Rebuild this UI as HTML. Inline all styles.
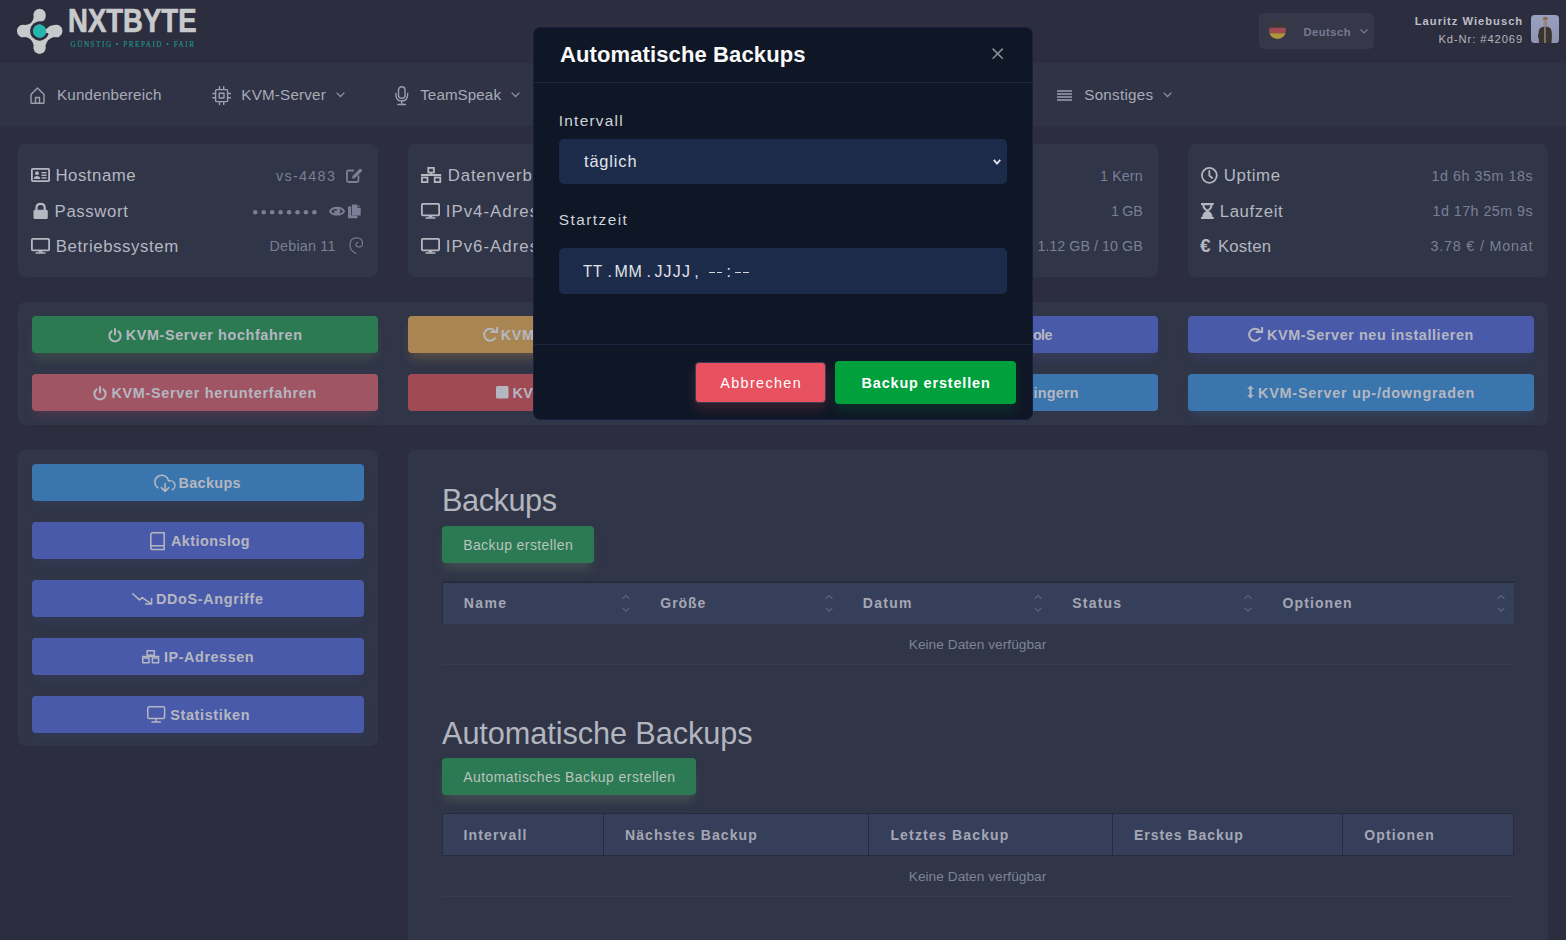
<!DOCTYPE html><html><head><meta charset="utf-8"><style>*{box-sizing:border-box;margin:0;padding:0}html,body{width:1566px;height:940px;overflow:hidden;position:relative;background:#2c2d3e;font-family:'Liberation Sans',sans-serif}</style></head><body>
<div style="position:absolute;left:0px;top:0px;width:1566px;height:63px;background:#2c2d3e;border-radius:0px;"></div>
<svg style="position:absolute;left:0px;top:0px;overflow:visible;" width="70" height="60" viewBox="0 0 70 60"><g transform="translate(39.6,31)"><path d="M -5.92,-13.85 A 6.3 6.3 0 1 1 5.92,-13.85 Q 5.5,-10.5 2,-9.6 L 0,0 L 6.9,-2.3 Q 10,-5.6 14.45,-5.92 A 6.3 6.3 0 1 1 14.45,5.92 Q 7.5,7.5 5.92,14.45 A 6.3 6.3 0 1 1 -5.92,14.45 Q -7.2,7.2 -14.25,5.92 A 6.3 6.3 0 1 1 -14.25,-5.92 Q -6.8,-6.8 -5.92,-13.85 Z" fill="#c8c9ca"/><path d="M 7.3,3.4 A 8.05 8.05 0 1 1 4.03,-6.97" fill="none" stroke="#2c2d3e" stroke-width="3.1" stroke-linecap="round"/><circle cx="0" cy="0" r="6.6" fill="#23b6ad"/></g></svg>
<div style="position:absolute;left:68.00px;top:1.07px;line-height:41px;white-space:nowrap;font-family:'Liberation Sans';font-size:32.4px;font-weight:700;color:#c8c9cb;letter-spacing:0.000px;transform:scaleX(0.85);transform-origin:0 0;-webkit-text-stroke:0.7px #c8c9cb;">NXTBYTE</div>
<div style="position:absolute;left:70.50px;top:41.00px;line-height:9px;white-space:nowrap;font-family:'Liberation Serif';font-size:7.2px;font-weight:400;color:#1f918b;letter-spacing:1.504px;-webkit-text-stroke:0.15px #1f918b;">GÜNSTIG • PREPAID • FAIR</div>
<div style="position:absolute;left:1259px;top:13px;width:115px;height:36px;background:#363849;border-radius:5px;"></div>
<svg style="position:absolute;left:1269px;top:22px;overflow:visible;" width="17" height="17" viewBox="0 0 17 17"><defs><clipPath id="fc"><circle cx="8.5" cy="8.5" r="8.5"/></clipPath></defs><g clip-path="url(#fc)"><rect x="0" y="0" width="17" height="5.67" fill="#3a393c"/><rect x="0" y="5.67" width="17" height="5.67" fill="#a04a50"/><rect x="0" y="11.33" width="17" height="5.7" fill="#b0983a"/></g></svg>
<div style="position:absolute;left:1303.50px;top:25.02px;line-height:14px;white-space:nowrap;font-family:'Liberation Sans';font-size:11.2px;font-weight:700;color:#777a90;letter-spacing:0.477px;">Deutsch</div>
<svg style="position:absolute;left:1360px;top:29px;overflow:visible;" width="8" height="5" viewBox="0 0 8 5"><path d="M0.5,0.5 L4,4 L7.5,0.5" fill="none" stroke="#777a90" stroke-width="1.2"/></svg>
<div style="position:absolute;left:1414.80px;top:14.12px;line-height:14px;white-space:nowrap;font-family:'Liberation Sans';font-size:11.2px;font-weight:700;color:#bdbec6;letter-spacing:0.992px;">Lauritz Wiebusch</div>
<div style="position:absolute;left:1438.40px;top:32.12px;line-height:14px;white-space:nowrap;font-family:'Liberation Sans';font-size:11.2px;font-weight:400;color:#b3b5bd;letter-spacing:0.920px;">Kd-Nr: #42069</div>
<svg style="position:absolute;left:1531px;top:15px;overflow:visible;" width="28" height="28" viewBox="0 0 28 28"><defs><clipPath id="avc"><rect x="0" y="0" width="28" height="28" rx="3.5"/></clipPath><linearGradient id="avg" x1="0" y1="0" x2="0.3" y2="1"><stop offset="0" stop-color="#9aa2c2"/><stop offset="1" stop-color="#8d95b0"/></linearGradient></defs><g clip-path="url(#avc)"><rect width="28" height="28" fill="url(#avg)"/><ellipse cx="14.4" cy="3.6" rx="2.4" ry="1.9" fill="#94644a"/><rect x="12.4" y="4.5" width="3.8" height="7" rx="1.5" fill="#9c8580"/><path d="M8,28 L7.6,21 Q7.2,16 8.8,13.2 L12.4,11.8 L16.6,11.8 L19.8,13.4 Q21.2,17 20.9,22 L20.5,28 Z" fill="#3a332f"/><path d="M7.2,19 L7,23 L10,23 L10.5,19 Z" fill="#3a332f"/><rect x="13" y="12" width="1.9" height="16" fill="#77736e"/></g></svg>
<div style="position:absolute;left:0px;top:63px;width:1566px;height:63px;background:#2f3345;border-radius:0px;"></div>
<svg style="position:absolute;left:30px;top:87px;overflow:visible;" width="15" height="17" viewBox="0 0 15 17"><path d="M1,7.5 L7.5,1 L14,7.5 L14,15.5 Q14,16.3 13.2,16.3 L1.8,16.3 Q1,16.3 1,15.5 Z" stroke="#9d9fad" fill="none" stroke-width="1.4" stroke-linecap="round" stroke-linejoin="round"/><path d="M5.5,16.3 L5.5,10.5 L9.5,10.5 L9.5,16.3" stroke="#9d9fad" fill="none" stroke-width="1.4" stroke-linecap="round" stroke-linejoin="round"/></svg>
<div style="position:absolute;left:57.00px;top:85.03px;line-height:19px;white-space:nowrap;font-family:'Liberation Sans';font-size:15.2px;font-weight:400;color:#a8aab6;letter-spacing:0.193px;">Kundenbereich</div>
<svg style="position:absolute;left:212px;top:86px;overflow:visible;" width="19" height="19" viewBox="0 0 19 19"><rect x="3.6" y="3.6" width="12" height="12" rx="1.2" stroke="#9d9fad" fill="none" stroke-width="1.4" stroke-linecap="round" stroke-linejoin="round"/><rect x="7.2" y="7.2" width="4.8" height="4.8" stroke="#9d9fad" fill="none" stroke-width="1.4" stroke-linecap="round" stroke-linejoin="round"/><path d="M7.5,0.8 V3.3 M11.7,0.8 V3.3 M7.5,15.9 V18.4 M11.7,15.9 V18.4 M0.8,7.5 H3.3 M0.8,11.7 H3.3 M15.9,7.5 H18.4 M15.9,11.7 H18.4" stroke="#9d9fad" fill="none" stroke-width="1.4" stroke-linecap="round" stroke-linejoin="round"/></svg>
<div style="position:absolute;left:241.30px;top:84.63px;line-height:19px;white-space:nowrap;font-family:'Liberation Sans';font-size:15.2px;font-weight:400;color:#a8aab6;letter-spacing:0.200px;">KVM-Server</div>
<svg style="position:absolute;left:336px;top:92px;overflow:visible;" width="9" height="5" viewBox="0 0 9 5"><path d="M0.6,0.6 L4.5,4.5 L8.4,0.6" fill="none" stroke="#8c8fa0" stroke-width="1.3"/></svg>
<svg style="position:absolute;left:395px;top:86px;overflow:visible;" width="14" height="19" viewBox="0 0 14 19"><rect x="3.5" y="0.8" width="6.5" height="11.5" rx="3.25" stroke="#9d9fad" fill="none" stroke-width="1.4" stroke-linecap="round" stroke-linejoin="round"/><path d="M0.8,7.5 Q0.8,15 6.75,15 Q12.7,15 12.7,7.5" stroke="#9d9fad" fill="none" stroke-width="1.4" stroke-linecap="round" stroke-linejoin="round"/><path d="M6.75,15 V18.5 M3,18.5 H10.5" stroke="#9d9fad" fill="none" stroke-width="1.4" stroke-linecap="round" stroke-linejoin="round"/></svg>
<div style="position:absolute;left:420.20px;top:84.63px;line-height:19px;white-space:nowrap;font-family:'Liberation Sans';font-size:15.2px;font-weight:400;color:#a8aab6;letter-spacing:0.075px;">TeamSpeak</div>
<svg style="position:absolute;left:511px;top:92px;overflow:visible;" width="9" height="5" viewBox="0 0 9 5"><path d="M0.6,0.6 L4.5,4.5 L8.4,0.6" fill="none" stroke="#8c8fa0" stroke-width="1.3"/></svg>
<svg style="position:absolute;left:1057px;top:90px;overflow:visible;" width="15" height="11" viewBox="0 0 15 11"><path d="M0,1 H15 M0,4 H15 M0,7 H15 M0,10 H15" stroke="#9d9fad" stroke-width="1.3"/></svg>
<div style="position:absolute;left:1084.30px;top:84.63px;line-height:19px;white-space:nowrap;font-family:'Liberation Sans';font-size:15.2px;font-weight:400;color:#a8aab6;letter-spacing:0.250px;">Sonstiges</div>
<svg style="position:absolute;left:1163px;top:92px;overflow:visible;" width="9" height="5" viewBox="0 0 9 5"><path d="M0.6,0.6 L4.5,4.5 L8.4,0.6" fill="none" stroke="#8c8fa0" stroke-width="1.3"/></svg>
<div style="position:absolute;left:18px;top:144px;width:360px;height:133px;background:#303547;border-radius:7px;"></div>
<div style="position:absolute;left:408px;top:144px;width:360px;height:133px;background:#303547;border-radius:7px;"></div>
<div style="position:absolute;left:798px;top:144px;width:360px;height:133px;background:#303547;border-radius:7px;"></div>
<div style="position:absolute;left:1188px;top:144px;width:360px;height:133px;background:#303547;border-radius:7px;"></div>
<svg style="position:absolute;left:31px;top:168px;overflow:visible;" width="19" height="14" viewBox="0 0 19 14"><rect x="0.9" y="0.9" width="17.2" height="12.2" rx="0.8" fill="none" stroke="#b5b7c1" stroke-width="1.8"/><circle cx="6" cy="5.2" r="1.9" fill="#b5b7c1"/><path d="M2.8,11 Q3,8 6,8 Q9,8 9.2,11 Z" fill="#b5b7c1"/><rect x="10.5" y="4" width="5" height="1.4" fill="#b5b7c1"/><rect x="10.5" y="6.6" width="5" height="1.4" fill="#b5b7c1"/><rect x="10.5" y="9.2" width="5" height="1.4" fill="#b5b7c1"/></svg>
<div style="position:absolute;left:55.40px;top:164.98px;line-height:21px;white-space:nowrap;font-family:'Liberation Sans';font-size:16.8px;font-weight:400;color:#b5b7c1;letter-spacing:0.531px;">Hostname</div>
<svg style="position:absolute;left:32.6px;top:203px;overflow:visible;" width="15.3" height="16" viewBox="0 0 15.3 16"><path d="M3.5,7 V4.8 Q3.5,0.9 7.6,0.9 Q11.7,0.9 11.7,4.8 V7" fill="none" stroke="#b5b7c1" stroke-width="2.2"/><rect x="0.5" y="6.8" width="14.3" height="9.2" rx="1.5" fill="#b5b7c1"/></svg>
<div style="position:absolute;left:54.60px;top:200.68px;line-height:21px;white-space:nowrap;font-family:'Liberation Sans';font-size:16.8px;font-weight:400;color:#b5b7c1;letter-spacing:0.598px;">Passwort</div>
<svg style="position:absolute;left:31px;top:238px;overflow:visible;" width="19" height="16" viewBox="0 0 19 16"><rect x="0.9" y="0.9" width="17.2" height="11.4" rx="0.8" fill="none" stroke="#b5b7c1" stroke-width="1.8"/><rect x="7.6" y="12.3" width="3.8" height="2.2" fill="#b5b7c1"/><rect x="4.5" y="14.2" width="10" height="1.6" rx="0.5" fill="#b5b7c1"/></svg>
<div style="position:absolute;left:55.70px;top:235.68px;line-height:21px;white-space:nowrap;font-family:'Liberation Sans';font-size:16.8px;font-weight:400;color:#b5b7c1;letter-spacing:0.606px;">Betriebssystem</div>
<div style="position:absolute;left:275.90px;top:167.04px;line-height:18px;white-space:nowrap;font-family:'Liberation Sans';font-size:14.3px;font-weight:400;color:#7b7f96;letter-spacing:1.354px;">vs-4483</div>
<svg style="position:absolute;left:346px;top:168px;overflow:visible;" width="16.6" height="14" viewBox="0 0 16.6 14"><path d="M8,2.5 H2.5 Q1,2.5 1,4 V12.5 Q1,14 2.5,14 H11 Q12.5,14 12.5,12.5 V7.5" fill="none" stroke="#7b7f96" stroke-width="1.8"/><path d="M6,10.5 L6.5,8 L13.5,1 Q14.3,0.3 15.1,1 L15.8,1.7 Q16.5,2.5 15.8,3.3 L8.8,10.2 Z" fill="#7b7f96"/></svg>
<svg style="position:absolute;left:253px;top:209.5px;overflow:visible;" width="64" height="4.5" viewBox="0 0 64 4.5"><circle cx="2.25" cy="2.25" r="2.25" fill="#7b7f96"/><circle cx="10.70" cy="2.25" r="2.25" fill="#7b7f96"/><circle cx="19.15" cy="2.25" r="2.25" fill="#7b7f96"/><circle cx="27.60" cy="2.25" r="2.25" fill="#7b7f96"/><circle cx="36.05" cy="2.25" r="2.25" fill="#7b7f96"/><circle cx="44.50" cy="2.25" r="2.25" fill="#7b7f96"/><circle cx="52.95" cy="2.25" r="2.25" fill="#7b7f96"/><circle cx="61.40" cy="2.25" r="2.25" fill="#7b7f96"/></svg>
<svg style="position:absolute;left:328.8px;top:205.6px;overflow:visible;" width="16.1" height="10.4" viewBox="0 0 16.1 10.4"><path d="M1,5.2 C3.6,0.6 12.6,0.6 15.2,5.2 C12.6,9.8 3.6,9.8 1,5.2 Z" fill="none" stroke="#7b7f96" stroke-width="1.8"/><circle cx="8.2" cy="5.3" r="3" fill="#7b7f96"/><circle cx="6.9" cy="4.1" r="1" fill="#313546"/></svg>
<svg style="position:absolute;left:348px;top:203.6px;overflow:visible;" width="13" height="14.4" viewBox="0 0 13 14.4"><path d="M0,2.5 H3.1 V11.4 H9.5 V14.3 H0 Z" fill="#7b7f96"/><path d="M3.9,0.4 H9.6 L12.7,3.5 V11.4 H3.9 Z" fill="#7b7f96"/><path d="M9.6,0.4 V3.5 H12.7" fill="none" stroke="#313546" stroke-width="0.8"/></svg>
<div style="position:absolute;left:269.50px;top:237.04px;line-height:18px;white-space:nowrap;font-family:'Liberation Sans';font-size:14.3px;font-weight:400;color:#7b7f96;letter-spacing:0.222px;">Debian 11</div>
<svg style="position:absolute;left:348.7px;top:236.8px;overflow:visible;" width="14" height="17" viewBox="0 0 14 17"><path d="M7,16.5 Q1,14 1,8 Q1,1 7.5,0.8 Q13.5,0.8 13.5,6.5 Q13.5,10 10,10 Q7,10 7,7.5 Q7,5.5 9,5.5" fill="none" stroke="#7b7f96" stroke-width="1.1" stroke-linecap="round"/></svg>
<svg style="position:absolute;left:421.2px;top:167.3px;overflow:visible;" width="20.3" height="15.6" viewBox="0 0 20.3 15.6"><rect x="7.3" y="0.9" width="5.6" height="4.6" fill="none" stroke="#b5b7c1" stroke-width="1.8"/><rect x="0.9" y="10.5" width="5.6" height="4.6" fill="none" stroke="#b5b7c1" stroke-width="1.8"/><rect x="13.7" y="10.5" width="5.6" height="4.6" fill="none" stroke="#b5b7c1" stroke-width="1.8"/><path d="M10.1,5.5 V7.8 M0,8 H20.2" stroke="#b5b7c1" stroke-width="1.8"/></svg>
<div style="position:absolute;left:447.80px;top:164.98px;line-height:21px;white-space:nowrap;font-family:'Liberation Sans';font-size:16.8px;font-weight:400;color:#b5b7c1;letter-spacing:0.815px;">Datenverbrauch</div>
<svg style="position:absolute;left:421px;top:203px;overflow:visible;" width="19" height="16" viewBox="0 0 19 16"><rect x="0.9" y="0.9" width="17.2" height="11.4" rx="0.8" fill="none" stroke="#b5b7c1" stroke-width="1.8"/><rect x="7.6" y="12.3" width="3.8" height="2.2" fill="#b5b7c1"/><rect x="4.5" y="14.2" width="10" height="1.6" rx="0.5" fill="#b5b7c1"/></svg>
<div style="position:absolute;left:445.80px;top:200.68px;line-height:21px;white-space:nowrap;font-family:'Liberation Sans';font-size:16.8px;font-weight:400;color:#b5b7c1;letter-spacing:1.024px;">IPv4-Adresse</div>
<svg style="position:absolute;left:421px;top:238px;overflow:visible;" width="19" height="16" viewBox="0 0 19 16"><rect x="0.9" y="0.9" width="17.2" height="11.4" rx="0.8" fill="none" stroke="#b5b7c1" stroke-width="1.8"/><rect x="7.6" y="12.3" width="3.8" height="2.2" fill="#b5b7c1"/><rect x="4.5" y="14.2" width="10" height="1.6" rx="0.5" fill="#b5b7c1"/></svg>
<div style="position:absolute;left:445.80px;top:235.68px;line-height:21px;white-space:nowrap;font-family:'Liberation Sans';font-size:16.8px;font-weight:400;color:#b5b7c1;letter-spacing:1.024px;">IPv6-Adresse</div>
<div style="position:absolute;left:1100.00px;top:167.04px;line-height:18px;white-space:nowrap;font-family:'Liberation Sans';font-size:14.3px;font-weight:400;color:#7b7f96;letter-spacing:0.115px;">1 Kern</div>
<div style="position:absolute;left:1111.00px;top:202.04px;line-height:18px;white-space:nowrap;font-family:'Liberation Sans';font-size:14.3px;font-weight:400;color:#7b7f96;letter-spacing:-0.298px;">1 GB</div>
<div style="position:absolute;left:1037.40px;top:237.04px;line-height:18px;white-space:nowrap;font-family:'Liberation Sans';font-size:14.3px;font-weight:400;color:#7b7f96;letter-spacing:0.028px;">1.12 GB / 10 GB</div>
<svg style="position:absolute;left:1201.2px;top:166.9px;overflow:visible;" width="16.7" height="16.7" viewBox="0 0 16.7 16.7"><circle cx="8.35" cy="8.35" r="7.45" fill="none" stroke="#b5b7c1" stroke-width="1.8"/><path d="M8.35,3.8 V8.6 L11.2,11" fill="none" stroke="#b5b7c1" stroke-width="1.8" stroke-linecap="round"/></svg>
<div style="position:absolute;left:1223.70px;top:164.68px;line-height:21px;white-space:nowrap;font-family:'Liberation Sans';font-size:16.8px;font-weight:400;color:#b5b7c1;letter-spacing:0.629px;">Uptime</div>
<svg style="position:absolute;left:1201.2px;top:203px;overflow:visible;" width="12.8" height="16" viewBox="0 0 12.8 16"><path d="M0,0 H12.8 V2 H11.5 Q11.5,6 7.5,8 Q11.5,10 11.5,14 H12.8 V16 H0 V14 H1.3 Q1.3,10 5.3,8 Q1.3,6 1.3,2 H0 Z" fill="#b5b7c1"/><path d="M3.3,2.2 H9.5 Q9.3,5 6.4,6.6 Q3.5,5 3.3,2.2 Z" fill="#323647"/></svg>
<div style="position:absolute;left:1219.70px;top:200.68px;line-height:21px;white-space:nowrap;font-family:'Liberation Sans';font-size:16.8px;font-weight:400;color:#b5b7c1;letter-spacing:0.617px;">Laufzeit</div>
<div style="position:absolute;left:1200.00px;top:234.21px;line-height:24px;white-space:nowrap;font-family:'Liberation Sans';font-size:19px;font-weight:700;color:#b5b7c1;letter-spacing:0.000px;">€</div>
<div style="position:absolute;left:1217.90px;top:235.68px;line-height:21px;white-space:nowrap;font-family:'Liberation Sans';font-size:16.8px;font-weight:400;color:#b5b7c1;letter-spacing:0.170px;">Kosten</div>
<div style="position:absolute;left:1431.40px;top:167.04px;line-height:18px;white-space:nowrap;font-family:'Liberation Sans';font-size:14.3px;font-weight:400;color:#7b7f96;letter-spacing:0.551px;">1d 6h 35m 18s</div>
<div style="position:absolute;left:1432.50px;top:202.04px;line-height:18px;white-space:nowrap;font-family:'Liberation Sans';font-size:14.3px;font-weight:400;color:#7b7f96;letter-spacing:0.459px;">1d 17h 25m 9s</div>
<div style="position:absolute;left:1430.40px;top:237.04px;line-height:18px;white-space:nowrap;font-family:'Liberation Sans';font-size:14.3px;font-weight:400;color:#7b7f96;letter-spacing:0.830px;">3.78 € / Monat</div>
<div style="position:absolute;left:18px;top:302px;width:1530px;height:123px;background:#303547;border-radius:7px;"></div>
<div style="position:absolute;left:32px;top:316px;width:346px;height:37px;background:#2b7a52;border-radius:4px;box-shadow:0 8px 11px -3px rgba(80,110,80,0.45);"></div>
<div style="position:absolute;left:32px;top:374px;width:346px;height:37px;background:#a05564;border-radius:4px;box-shadow:0 8px 11px -3px rgba(140,70,90,0.3);"></div>
<div style="position:absolute;left:408px;top:316px;width:360px;height:37px;background:#a98651;border-radius:4px;box-shadow:0 8px 11px -3px rgba(150,120,70,0.45);"></div>
<div style="position:absolute;left:408px;top:374px;width:360px;height:37px;background:#a04a56;border-radius:4px;"></div>
<div style="position:absolute;left:798px;top:316px;width:360px;height:37px;background:#4a5aab;border-radius:4px;box-shadow:0 8px 11px -3px rgba(70,80,150,0.3);"></div>
<div style="position:absolute;left:798px;top:374px;width:360px;height:37px;background:#3a75ae;border-radius:4px;"></div>
<div style="position:absolute;left:1188px;top:316px;width:346px;height:37px;background:#4a5aab;border-radius:4px;box-shadow:0 8px 11px -3px rgba(70,80,150,0.3);"></div>
<div style="position:absolute;left:1188px;top:374px;width:346px;height:37px;background:#3a75ae;border-radius:4px;box-shadow:0 8px 11px -3px rgba(60,100,150,0.3);"></div>
<svg style="position:absolute;left:107.5px;top:327.5px;overflow:visible;" width="14" height="14" viewBox="0 0 14 14"><path d="M3.6,3.4 A5.6 5.6 0 1 0 10.4,3.4" fill="none" stroke="#b5b7c0" stroke-width="2" stroke-linecap="round"/><path d="M7,0.9 V6.6" stroke="#b5b7c0" stroke-width="2" stroke-linecap="round"/></svg>
<div style="position:absolute;left:125.80px;top:325.81px;line-height:18px;white-space:nowrap;font-family:'Liberation Sans';font-size:14.4px;font-weight:700;color:#b5b7c0;letter-spacing:0.613px;">KVM-Server hochfahren</div>
<svg style="position:absolute;left:93px;top:385.5px;overflow:visible;" width="14" height="14" viewBox="0 0 14 14"><path d="M3.6,3.4 A5.6 5.6 0 1 0 10.4,3.4" fill="none" stroke="#b5b7c0" stroke-width="2" stroke-linecap="round"/><path d="M7,0.9 V6.6" stroke="#b5b7c0" stroke-width="2" stroke-linecap="round"/></svg>
<div style="position:absolute;left:111.40px;top:383.81px;line-height:18px;white-space:nowrap;font-family:'Liberation Sans';font-size:14.4px;font-weight:700;color:#b5b7c0;letter-spacing:0.703px;">KVM-Server herunterfahren</div>
<svg style="position:absolute;left:482.6px;top:326.9px;overflow:visible;" width="15" height="14" viewBox="0 0 15 14"><path d="M12.5,10.4 A6 6 0 1 1 11.8,3.9" fill="none" stroke="#b5b7c0" stroke-width="2"/><path d="M7.6,5.1 H14.1 V0" fill="none" stroke="#b5b7c0" stroke-width="2"/></svg>
<div style="position:absolute;left:500.70px;top:325.81px;line-height:18px;white-space:nowrap;font-family:'Liberation Sans';font-size:14.4px;font-weight:700;color:#b5b7c0;letter-spacing:0.642px;">KVM-Server neustarten</div>
<svg style="position:absolute;left:495.5px;top:386px;overflow:visible;" width="12.5" height="12.5" viewBox="0 0 12.5 12.5"><rect width="12.5" height="12.5" rx="1.5" fill="#b5b7c0"/></svg>
<div style="position:absolute;left:512.40px;top:383.81px;line-height:18px;white-space:nowrap;font-family:'Liberation Sans';font-size:14.4px;font-weight:700;color:#b5b7c0;letter-spacing:0.497px;">KVM-Server stoppen</div>
<div style="position:absolute;left:1032.90px;top:325.81px;line-height:18px;white-space:nowrap;font-family:'Liberation Sans';font-size:14.4px;font-weight:700;color:#b5b7c0;letter-spacing:-0.648px;">ole</div>
<div style="position:absolute;left:1033.60px;top:383.81px;line-height:18px;white-space:nowrap;font-family:'Liberation Sans';font-size:14.4px;font-weight:700;color:#b5b7c0;letter-spacing:0.203px;">ingern</div>
<svg style="position:absolute;left:1248px;top:326.9px;overflow:visible;" width="15" height="14" viewBox="0 0 15 14"><path d="M12.5,10.4 A6 6 0 1 1 11.8,3.9" fill="none" stroke="#b5b7c0" stroke-width="2"/><path d="M7.6,5.1 H14.1 V0" fill="none" stroke="#b5b7c0" stroke-width="2"/></svg>
<div style="position:absolute;left:1267.00px;top:325.81px;line-height:18px;white-space:nowrap;font-family:'Liberation Sans';font-size:14.4px;font-weight:700;color:#b5b7c0;letter-spacing:0.583px;">KVM-Server neu installieren</div>
<svg style="position:absolute;left:1247px;top:385px;overflow:visible;" width="7" height="14" viewBox="0 0 7 14"><path d="M3.5,0.5 L6.8,4 H4.6 V10 H6.8 L3.5,13.5 L0.2,10 H2.4 V4 H0.2 Z" fill="#b5b7c0"/></svg>
<div style="position:absolute;left:1258.00px;top:383.81px;line-height:18px;white-space:nowrap;font-family:'Liberation Sans';font-size:14.4px;font-weight:700;color:#b5b7c0;letter-spacing:0.783px;">KVM-Server up-/downgraden</div>
<div style="position:absolute;left:18px;top:450px;width:360px;height:296px;background:#303547;border-radius:7px;"></div>
<div style="position:absolute;left:32px;top:464px;width:332px;height:37px;background:#3a75ae;border-radius:4px;box-shadow:0 8px 11px -3px rgba(60,70,120,0.3);"></div>
<div style="position:absolute;left:32px;top:522px;width:332px;height:37px;background:#4a5aab;border-radius:4px;box-shadow:0 8px 11px -3px rgba(60,70,120,0.3);"></div>
<div style="position:absolute;left:32px;top:580px;width:332px;height:37px;background:#4a5aab;border-radius:4px;box-shadow:0 8px 11px -3px rgba(60,70,120,0.3);"></div>
<div style="position:absolute;left:32px;top:638px;width:332px;height:37px;background:#4a5aab;border-radius:4px;box-shadow:0 8px 11px -3px rgba(60,70,120,0.3);"></div>
<div style="position:absolute;left:32px;top:696px;width:332px;height:37px;background:#4a5aab;border-radius:4px;box-shadow:0 8px 11px -3px rgba(60,70,120,0.3);"></div>
<svg style="position:absolute;left:155.2px;top:475.2px;overflow:visible;" width="20.4" height="17" viewBox="0 0 20.4 17"><path d="M2.7,12.7 A6.9 6.9 0 1 1 13.6,6.1 A4.6 4.6 0 0 1 17.1,14.7" fill="none" stroke="#b5b7c0" stroke-width="1.5" stroke-linecap="round" stroke-linejoin="round"/><path d="M10.1,8.5 V16.4 M6.3,12.6 L10.1,16.4 L13.9,12.6" fill="none" stroke="#b5b7c0" stroke-width="1.5" stroke-linecap="round" stroke-linejoin="round"/></svg>
<div style="position:absolute;left:178.40px;top:473.81px;line-height:18px;white-space:nowrap;font-family:'Liberation Sans';font-size:14.4px;font-weight:700;color:#b5b7c0;letter-spacing:0.367px;">Backups</div>
<svg style="position:absolute;left:149.5px;top:531.8px;overflow:visible;" width="15" height="18.4" viewBox="0 0 15 18.4"><path d="M0.8,15 V3 Q0.8,0.8 3,0.8 H14.2 V13.8 H3 Q0.8,13.8 0.8,15.7 Q0.8,17.6 3,17.6 H14.2 V13.8" fill="none" stroke="#b5b7c0" stroke-width="1.5" stroke-linecap="round" stroke-linejoin="round"/></svg>
<div style="position:absolute;left:170.90px;top:531.81px;line-height:18px;white-space:nowrap;font-family:'Liberation Sans';font-size:14.4px;font-weight:700;color:#b5b7c0;letter-spacing:0.471px;">Aktionslog</div>
<svg style="position:absolute;left:132px;top:593px;overflow:visible;" width="20.5" height="12" viewBox="0 0 20.5 12"><path d="M0.7,0.8 L7.5,6.9 L10.3,4.6 L18.8,10.6 M13.6,10.9 H19.6 V5.4" fill="none" stroke="#b5b7c0" stroke-width="1.5" stroke-linecap="round" stroke-linejoin="round"/></svg>
<div style="position:absolute;left:155.90px;top:589.81px;line-height:18px;white-space:nowrap;font-family:'Liberation Sans';font-size:14.4px;font-weight:700;color:#b5b7c0;letter-spacing:0.663px;">DDoS-Angriffe</div>
<svg style="position:absolute;left:142.1px;top:650.2px;overflow:visible;" width="17.3" height="13.5" viewBox="0 0 17.3 13.5"><rect x="5.1" y="0.75" width="7.2" height="4.4" fill="none" stroke="#b5b7c0" stroke-width="1.5" stroke-linecap="round" stroke-linejoin="round"/><rect x="0.75" y="8" width="6.2" height="4.8" fill="none" stroke="#b5b7c0" stroke-width="1.5" stroke-linecap="round" stroke-linejoin="round"/><rect x="10.4" y="8" width="6.2" height="4.8" fill="none" stroke="#b5b7c0" stroke-width="1.5" stroke-linecap="round" stroke-linejoin="round"/><path d="M8.7,5.2 V6.6 M0.5,6.6 H16.9" fill="none" stroke="#b5b7c0" stroke-width="1.5" stroke-linecap="round" stroke-linejoin="round"/></svg>
<div style="position:absolute;left:164.00px;top:647.81px;line-height:18px;white-space:nowrap;font-family:'Liberation Sans';font-size:14.4px;font-weight:700;color:#b5b7c0;letter-spacing:0.562px;">IP-Adressen</div>
<svg style="position:absolute;left:147px;top:706px;overflow:visible;" width="18.4" height="17" viewBox="0 0 18.4 17"><rect x="0.8" y="0.8" width="16.8" height="11.6" rx="1.5" fill="none" stroke="#b5b7c0" stroke-width="1.5" stroke-linecap="round" stroke-linejoin="round"/><path d="M9.2,12.4 V15.8 M5,16 H13.4" fill="none" stroke="#b5b7c0" stroke-width="1.5" stroke-linecap="round" stroke-linejoin="round"/></svg>
<div style="position:absolute;left:170.20px;top:705.81px;line-height:18px;white-space:nowrap;font-family:'Liberation Sans';font-size:14.4px;font-weight:700;color:#b5b7c0;letter-spacing:0.652px;">Statistiken</div>
<div style="position:absolute;left:408px;top:450px;width:1140px;height:520px;background:#303547;border-radius:7px;"></div>
<div style="position:absolute;left:442.00px;top:481.46px;line-height:39px;white-space:nowrap;font-family:'Liberation Sans';font-size:30.7px;font-weight:400;color:#b3b5bf;letter-spacing:-0.451px;">Backups</div>
<div style="position:absolute;left:442px;top:526px;width:152px;height:37px;background:#2b7a53;border-radius:4px;box-shadow:0 8px 11px -3px rgba(85,100,90,0.6);"></div>
<div style="position:absolute;left:463.20px;top:536.05px;line-height:18px;white-space:nowrap;font-family:'Liberation Sans';font-size:14px;font-weight:400;color:#b9c3bf;letter-spacing:0.406px;">Backup erstellen</div>
<div style="position:absolute;left:442px;top:581px;width:1072px;height:43px;background:#363f59;border-radius:0px;border-top:2px solid #272b3b;border-left:1px solid #272b3b;"></div>
<div style="position:absolute;left:463.80px;top:594.35px;line-height:18px;white-space:nowrap;font-family:'Liberation Sans';font-size:14px;font-weight:700;color:#a4a7b5;letter-spacing:1.353px;">Name</div>
<div style="position:absolute;left:660.30px;top:594.35px;line-height:18px;white-space:nowrap;font-family:'Liberation Sans';font-size:14px;font-weight:700;color:#a4a7b5;letter-spacing:0.966px;">Größe</div>
<div style="position:absolute;left:862.80px;top:594.35px;line-height:18px;white-space:nowrap;font-family:'Liberation Sans';font-size:14px;font-weight:700;color:#a4a7b5;letter-spacing:1.284px;">Datum</div>
<div style="position:absolute;left:1072.30px;top:594.35px;line-height:18px;white-space:nowrap;font-family:'Liberation Sans';font-size:14px;font-weight:700;color:#a4a7b5;letter-spacing:1.181px;">Status</div>
<div style="position:absolute;left:1282.60px;top:594.35px;line-height:18px;white-space:nowrap;font-family:'Liberation Sans';font-size:14px;font-weight:700;color:#a4a7b5;letter-spacing:1.080px;">Optionen</div>
<svg style="position:absolute;left:622px;top:595px;overflow:visible;" width="8" height="17" viewBox="0 0 8 17"><path d="M0.5,3.8 L4,0.5 L7.5,3.8" fill="none" stroke="#5c6278" stroke-width="1.2"/><path d="M0.5,12.8 L4,16.2 L7.5,12.8" fill="none" stroke="#5c6278" stroke-width="1.2"/></svg>
<svg style="position:absolute;left:825px;top:595px;overflow:visible;" width="8" height="17" viewBox="0 0 8 17"><path d="M0.5,3.8 L4,0.5 L7.5,3.8" fill="none" stroke="#5c6278" stroke-width="1.2"/><path d="M0.5,12.8 L4,16.2 L7.5,12.8" fill="none" stroke="#5c6278" stroke-width="1.2"/></svg>
<svg style="position:absolute;left:1034px;top:595px;overflow:visible;" width="8" height="17" viewBox="0 0 8 17"><path d="M0.5,3.8 L4,0.5 L7.5,3.8" fill="none" stroke="#5c6278" stroke-width="1.2"/><path d="M0.5,12.8 L4,16.2 L7.5,12.8" fill="none" stroke="#5c6278" stroke-width="1.2"/></svg>
<svg style="position:absolute;left:1244px;top:595px;overflow:visible;" width="8" height="17" viewBox="0 0 8 17"><path d="M0.5,3.8 L4,0.5 L7.5,3.8" fill="none" stroke="#5c6278" stroke-width="1.2"/><path d="M0.5,12.8 L4,16.2 L7.5,12.8" fill="none" stroke="#5c6278" stroke-width="1.2"/></svg>
<svg style="position:absolute;left:1496.5px;top:595px;overflow:visible;" width="8" height="17" viewBox="0 0 8 17"><path d="M0.5,3.8 L4,0.5 L7.5,3.8" fill="none" stroke="#5c6278" stroke-width="1.2"/><path d="M0.5,12.8 L4,16.2 L7.5,12.8" fill="none" stroke="#5c6278" stroke-width="1.2"/></svg>
<div style="position:absolute;left:908.75px;top:635.75px;line-height:18px;white-space:nowrap;font-family:'Liberation Sans';font-size:13.7px;font-weight:400;color:#7f8398;letter-spacing:0.027px;">Keine Daten verfügbar</div>
<div style="position:absolute;left:442px;top:664px;width:1072px;height:1px;background:#383c52;border-radius:0px;"></div>
<div style="position:absolute;left:442.00px;top:713.86px;line-height:39px;white-space:nowrap;font-family:'Liberation Sans';font-size:30.7px;font-weight:400;color:#b3b5bf;letter-spacing:-0.087px;">Automatische Backups</div>
<div style="position:absolute;left:442px;top:758px;width:254px;height:37px;background:#2b7a53;border-radius:4px;box-shadow:0 8px 11px -3px rgba(85,100,90,0.6);"></div>
<div style="position:absolute;left:463.20px;top:768.15px;line-height:18px;white-space:nowrap;font-family:'Liberation Sans';font-size:14px;font-weight:400;color:#b9c3bf;letter-spacing:0.434px;">Automatisches Backup erstellen</div>
<div style="position:absolute;left:442px;top:813px;width:1072px;height:43px;background:#363f59;border-radius:0px;border:1px solid #272b3b;"></div>
<div style="position:absolute;left:603px;top:813px;width:1px;height:43px;background:#272b3b;border-radius:0px;"></div>
<div style="position:absolute;left:868px;top:813px;width:1px;height:43px;background:#272b3b;border-radius:0px;"></div>
<div style="position:absolute;left:1112px;top:813px;width:1px;height:43px;background:#272b3b;border-radius:0px;"></div>
<div style="position:absolute;left:1342px;top:813px;width:1px;height:43px;background:#272b3b;border-radius:0px;"></div>
<div style="position:absolute;left:463.60px;top:826.35px;line-height:18px;white-space:nowrap;font-family:'Liberation Sans';font-size:14px;font-weight:700;color:#a4a7b5;letter-spacing:1.137px;">Intervall</div>
<div style="position:absolute;left:625.00px;top:826.35px;line-height:18px;white-space:nowrap;font-family:'Liberation Sans';font-size:14px;font-weight:700;color:#a4a7b5;letter-spacing:1.070px;">Nächstes Backup</div>
<div style="position:absolute;left:890.40px;top:826.35px;line-height:18px;white-space:nowrap;font-family:'Liberation Sans';font-size:14px;font-weight:700;color:#a4a7b5;letter-spacing:1.177px;">Letztes Backup</div>
<div style="position:absolute;left:1134.00px;top:826.35px;line-height:18px;white-space:nowrap;font-family:'Liberation Sans';font-size:14px;font-weight:700;color:#a4a7b5;letter-spacing:0.968px;">Erstes Backup</div>
<div style="position:absolute;left:1364.30px;top:826.35px;line-height:18px;white-space:nowrap;font-family:'Liberation Sans';font-size:14px;font-weight:700;color:#a4a7b5;letter-spacing:1.138px;">Optionen</div>
<div style="position:absolute;left:908.75px;top:867.65px;line-height:18px;white-space:nowrap;font-family:'Liberation Sans';font-size:13.7px;font-weight:400;color:#7f8398;letter-spacing:0.027px;">Keine Daten verfügbar</div>
<div style="position:absolute;left:442px;top:896px;width:1072px;height:1px;background:#383c52;border-radius:0px;"></div>
<div style="position:absolute;left:533px;top:27px;width:500px;height:393px;background:#0f1726;border-radius:7px;border:1px solid #1a1e42;"></div>
<div style="position:absolute;left:560.00px;top:40.87px;line-height:28px;white-space:nowrap;font-family:'Liberation Sans';font-size:22px;font-weight:700;color:#fafafa;letter-spacing:0.116px;">Automatische Backups</div>
<svg style="position:absolute;left:992px;top:48.4px;overflow:visible;" width="11.4" height="11.3" viewBox="0 0 11.4 11.3"><path d="M0.6,0.6 L10.8,10.7 M10.8,0.6 L0.6,10.7" stroke="#8a8f9a" stroke-width="1.5"/></svg>
<div style="position:absolute;left:533px;top:82px;width:500px;height:1px;background:#1c2440;border-radius:0px;"></div>
<div style="position:absolute;left:558.80px;top:110.66px;line-height:20px;white-space:nowrap;font-family:'Liberation Sans';font-size:15.4px;font-weight:400;color:#d0d3d8;letter-spacing:1.239px;">Intervall</div>
<div style="position:absolute;left:559px;top:139px;width:448px;height:45px;background:#1c2b4a;border-radius:5px;"></div>
<div style="position:absolute;left:584.00px;top:151.21px;line-height:21px;white-space:nowrap;font-family:'Liberation Sans';font-size:16.4px;font-weight:400;color:#e2e4e8;letter-spacing:0.852px;">täglich</div>
<svg style="position:absolute;left:993.4px;top:158.7px;overflow:visible;" width="8" height="6.2" viewBox="0 0 8 6.2"><path d="M0.8,0.8 L4,4.6 L7.2,0.8" fill="none" stroke="#e2e4e8" stroke-width="1.8"/></svg>
<div style="position:absolute;left:558.70px;top:209.66px;line-height:20px;white-space:nowrap;font-family:'Liberation Sans';font-size:15.4px;font-weight:400;color:#d0d3d8;letter-spacing:1.468px;">Startzeit</div>
<div style="position:absolute;left:559px;top:248px;width:448px;height:46px;background:#1c2b4a;border-radius:5px;"></div>
<div style="position:absolute;left:582.80px;top:261.85px;line-height:20px;white-space:nowrap;font-family:'Liberation Sans';font-size:16px;font-weight:400;color:#e2e4e8;letter-spacing:0.000px;transform:scaleX(0.94);transform-origin:0 0;">T</div>
<div style="position:absolute;left:593.40px;top:261.85px;line-height:20px;white-space:nowrap;font-family:'Liberation Sans';font-size:16px;font-weight:400;color:#e2e4e8;letter-spacing:0.000px;transform:scaleX(0.94);transform-origin:0 0;">T</div>
<div style="position:absolute;left:607.40px;top:261.85px;line-height:20px;white-space:nowrap;font-family:'Liberation Sans';font-size:16px;font-weight:400;color:#e2e4e8;letter-spacing:0.000px;transform:scaleX(1);transform-origin:0 0;">.</div>
<div style="position:absolute;left:614.60px;top:261.85px;line-height:20px;white-space:nowrap;font-family:'Liberation Sans';font-size:16px;font-weight:400;color:#e2e4e8;letter-spacing:0.000px;transform:scaleX(1);transform-origin:0 0;">M</div>
<div style="position:absolute;left:628.60px;top:261.85px;line-height:20px;white-space:nowrap;font-family:'Liberation Sans';font-size:16px;font-weight:400;color:#e2e4e8;letter-spacing:0.000px;transform:scaleX(1);transform-origin:0 0;">M</div>
<div style="position:absolute;left:646.50px;top:261.85px;line-height:20px;white-space:nowrap;font-family:'Liberation Sans';font-size:16px;font-weight:400;color:#e2e4e8;letter-spacing:0.000px;transform:scaleX(1);transform-origin:0 0;">.</div>
<div style="position:absolute;left:654.60px;top:261.85px;line-height:20px;white-space:nowrap;font-family:'Liberation Sans';font-size:16px;font-weight:400;color:#e2e4e8;letter-spacing:0.000px;transform:scaleX(1);transform-origin:0 0;">J</div>
<div style="position:absolute;left:663.60px;top:261.85px;line-height:20px;white-space:nowrap;font-family:'Liberation Sans';font-size:16px;font-weight:400;color:#e2e4e8;letter-spacing:0.000px;transform:scaleX(1);transform-origin:0 0;">J</div>
<div style="position:absolute;left:672.80px;top:261.85px;line-height:20px;white-space:nowrap;font-family:'Liberation Sans';font-size:16px;font-weight:400;color:#e2e4e8;letter-spacing:0.000px;transform:scaleX(1);transform-origin:0 0;">J</div>
<div style="position:absolute;left:681.90px;top:261.85px;line-height:20px;white-space:nowrap;font-family:'Liberation Sans';font-size:16px;font-weight:400;color:#e2e4e8;letter-spacing:0.000px;transform:scaleX(1);transform-origin:0 0;">J</div>
<div style="position:absolute;left:694.30px;top:261.85px;line-height:20px;white-space:nowrap;font-family:'Liberation Sans';font-size:16px;font-weight:400;color:#e2e4e8;letter-spacing:0.000px;transform:scaleX(1);transform-origin:0 0;">,</div>
<div style="position:absolute;left:726.60px;top:261.85px;line-height:20px;white-space:nowrap;font-family:'Liberation Sans';font-size:16px;font-weight:400;color:#e2e4e8;letter-spacing:0.000px;transform:scaleX(1);transform-origin:0 0;">:</div>
<div style="position:absolute;left:708.5999999999999px;top:271.7px;width:6.100000000000046px;height:1.15px;background:#d2d5db;border-radius:0px;"></div>
<div style="position:absolute;left:716.5999999999999px;top:271.7px;width:5.700000000000069px;height:1.15px;background:#d2d5db;border-radius:0px;"></div>
<div style="position:absolute;left:735.3px;top:271.7px;width:6.000000000000023px;height:1.15px;background:#d2d5db;border-radius:0px;"></div>
<div style="position:absolute;left:743.0999999999999px;top:271.7px;width:5.9px;height:1.15px;background:#d2d5db;border-radius:0px;"></div>
<div style="position:absolute;left:533px;top:344px;width:500px;height:1px;background:#1c2440;border-radius:0px;"></div>
<div style="position:absolute;left:695px;top:362px;width:131px;height:41px;background:#e85260;border-radius:4px;border:1px solid #3a3d5a;box-shadow:0 6px 12px rgba(232,82,96,0.18);"></div>
<div style="position:absolute;left:720.20px;top:374.31px;line-height:18px;white-space:nowrap;font-family:'Liberation Sans';font-size:14.4px;font-weight:400;color:#ffffff;letter-spacing:1.361px;">Abbrechen</div>
<div style="position:absolute;left:835px;top:361px;width:181px;height:43px;background:#00a03d;border-radius:4px;box-shadow:0 6px 12px rgba(0,160,61,0.18);"></div>
<div style="position:absolute;left:861.60px;top:374.31px;line-height:18px;white-space:nowrap;font-family:'Liberation Sans';font-size:14.4px;font-weight:700;color:#ffffff;letter-spacing:0.861px;">Backup erstellen</div>
</body></html>
